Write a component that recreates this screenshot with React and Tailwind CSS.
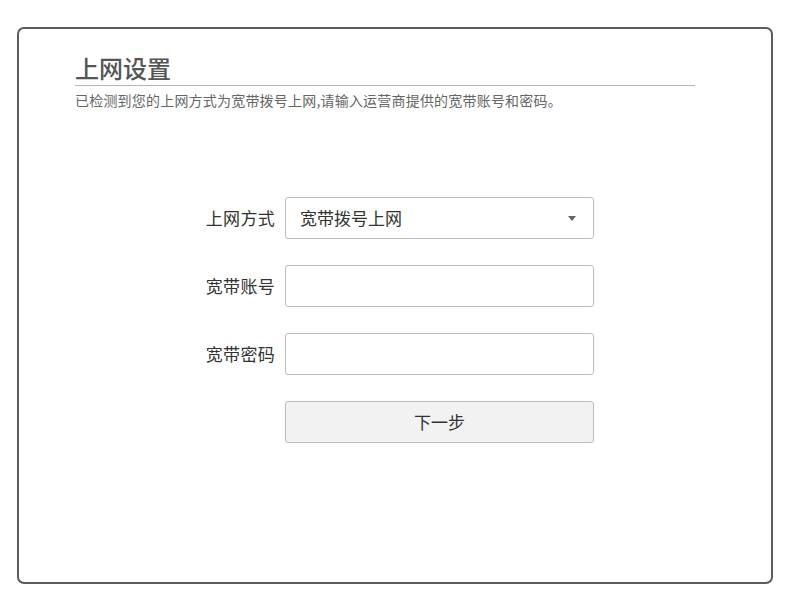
export default function App() {
  const font = { fontFamily: '"Noto Sans CJK SC", "Noto Sans", sans-serif' }
  return (
    <div className="w-[796px] h-[604px] bg-white pt-[27px] pl-[17px]" style={font}>
      <div className="w-[756px] h-[557px] border-2 border-[#5c5c5c] rounded-[7px] pl-[56px] pt-[24px]">
        <div className="w-[620px] border-b border-[#b4b4b4] pb-[2px]">
          <h1 className="text-[24px] leading-[30px] font-medium text-[#555]">上网设置</h1>
        </div>
        <p className="text-[14px] leading-[20px] mt-[4px] tracking-[0.2px] text-[#666]">
          已检测到您的上网方式为宽带拨号上网,请输入运营商提供的宽带账号和密码。
        </p>

        <div className="mt-[87px] ml-[120px] flex flex-col gap-[26px]">
          <div className="flex items-center">
            <span className="w-[90px] text-right text-[17px] tracking-[0.3px] text-[#333] pr-[10px]">上网方式</span>
            <div className="w-[309px] h-[42px] border border-[#bcbcbc] rounded-[3px] flex items-center justify-between pl-[14px] pr-[17px]">
              <span className="text-[17px] text-[#333]">宽带拨号上网</span>
              <svg width="8" height="5" viewBox="0 0 8 5">
                <path d="M0 0 L8 0 L4 5 Z" fill="#666" />
              </svg>
            </div>
          </div>
          <div className="flex items-center">
            <span className="w-[90px] text-right text-[17px] tracking-[0.3px] text-[#333] pr-[10px]">宽带账号</span>
            <input className="w-[309px] h-[42px] border border-[#bcbcbc] rounded-[3px] outline-none px-[12px]" />
          </div>
          <div className="flex items-center">
            <span className="w-[90px] text-right text-[17px] tracking-[0.3px] text-[#333] pr-[10px]">宽带密码</span>
            <input type="password" className="w-[309px] h-[42px] border border-[#bcbcbc] rounded-[3px] outline-none px-[12px]" />
          </div>
          <div className="flex items-center">
            <span className="w-[90px]"></span>
            <button className="w-[309px] h-[42px] border border-[#bcbcbc] rounded-[3px] bg-[#f2f2f2] text-[17px] text-[#333]">
              下一步
            </button>
          </div>
        </div>
      </div>
    </div>
  )
}
